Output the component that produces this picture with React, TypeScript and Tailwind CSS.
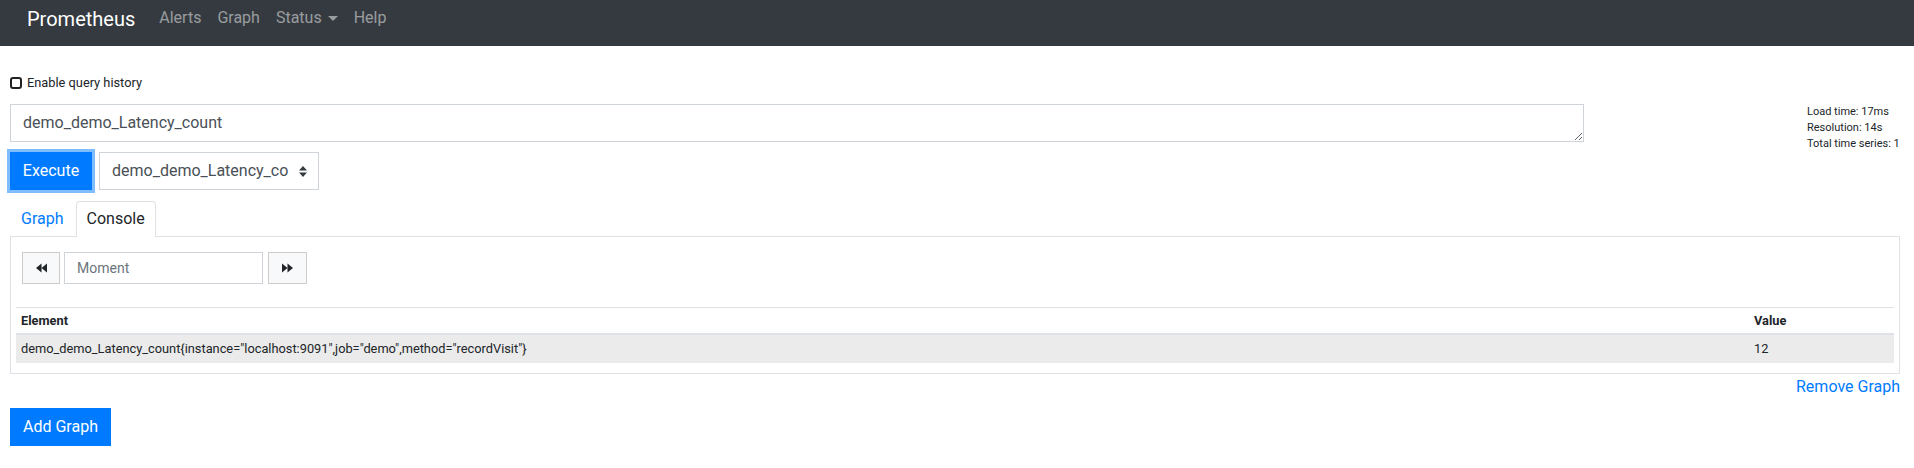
import React from "react";

function Back() {
  return (
    <svg width="11" height="10" viewBox="0 0 11 10">
      <path d="M0 5 L5.5 0.5 L5.5 9.5 Z M5.5 5 L11 0.5 L11 9.5 Z" fill="#212529" />
    </svg>
  );
}

function Fwd() {
  return (
    <svg width="11" height="10" viewBox="0 0 11 10">
      <path d="M11 5 L5.5 0.5 L5.5 9.5 Z M5.5 5 L0 0.5 L0 9.5 Z" fill="#212529" />
    </svg>
  );
}

export default function App() {
  return (
    <div className="font-['Roboto',sans-serif] text-[#212529] bg-white min-h-[468px] w-[1914px]">
      <nav className="h-[46px] bg-[#343a40] flex items-start pl-[27px]">
        <span className="text-[20px] leading-[30px] pt-[4px] text-white">Prometheus</span>
        <div className="flex ml-[16px] pt-[6px] text-[16px] leading-[24px] text-white/50">
          <span className="px-[8px]">Alerts</span>
          <span className="px-[8px]">Graph</span>
          <span className="px-[8px] flex items-center">
            Status
            <span className="ml-[6px] inline-block w-0 h-0 border-l-[5px] border-r-[5px] border-t-[5px] border-l-transparent border-r-transparent border-t-white/50" />
          </span>
          <span className="px-[8px]">Help</span>
        </div>
      </nav>

      <div className="pl-[10px]">
        <div className="mt-[27px] h-[20px] flex items-center">
          <span className="w-[12px] h-[12px] border-2 border-[#222] rounded-[3px]" />
          <span className="ml-[5px] text-[12.8px]">Enable query history</span>
        </div>

        <div className="mt-[11px] flex">
          <div className="w-[1574px]">
            <textarea
              readOnly
              value="demo_demo_Latency_count"
              className="block w-full h-[38px] border border-[#ced4da] px-[12px] py-[6px] text-[16px] leading-[24px] text-[#495057] outline-none"
            />
            <div className="mt-[10px] flex items-center">
              <button className="h-[38px] w-[82px] bg-[#007bff] text-white text-[16px] ring-[3px] ring-[#80bdff]">
                Execute
              </button>
              <div className="ml-[7px] h-[38px] w-[220px] border border-[#ced4da] flex items-center text-[16px] text-[#495057]">
                <span className="ml-[12px] w-[177px] overflow-hidden whitespace-nowrap">demo_demo_Latency_co</span>
                <svg width="8" height="11" viewBox="0 0 8 11" className="ml-[10px]">
                  <path d="M0 4.5 L4 0 L8 4.5 Z" fill="#343a40" />
                  <path d="M0 6.5 L4 11 L8 6.5 Z" fill="#343a40" />
                </svg>
              </div>
            </div>
          </div>
          <div className="ml-[223px] text-[11px] leading-[16px] text-[#212529]">
            <div>Load time: 17ms</div>
            <div>Resolution: 14s</div>
            <div>Total time series: 1</div>
          </div>
        </div>

        <div className="mt-[11px] flex items-end text-[16px] leading-[24px]">
          <span className="ml-[1px] px-[10px] py-[5px] text-[#007bff]">Graph</span>
          <span className="relative z-10 ml-[2px] px-[10px] pt-[5px] pb-[6px] -mb-[1px] bg-white border border-b-0 border-[#dee2e6] rounded-t-[4px]">
            Console
          </span>
        </div>

        <div className="w-[1890px] border border-[#dee2e6]">
          <div className="pt-[15px] pl-[11px] flex h-[47px]">
            <div className="w-[38px] h-[32px] bg-[#f8f9fa] border border-[#ccc] flex items-center justify-center">
              <Back />
            </div>
            <div className="ml-[4px] w-[199px] h-[32px] border border-[#ced4da] flex items-center pl-[12px] text-[14px] text-[#6c757d]">
              Moment
            </div>
            <div className="ml-[5px] w-[39px] h-[32px] bg-[#f8f9fa] border border-[#ccc] flex items-center justify-center">
              <Fwd />
            </div>
          </div>
          <div className="mx-[5px] mt-[23px] mb-[10px] text-[12.8px]">
            <div className="border-t border-[#dee2e6] h-[28px] flex items-center border-b-2 font-bold">
              <span className="pl-[5px] flex-1">Element</span>
              <span className="w-[140px]">Value</span>
            </div>
            <div className="h-[28px] bg-[#ebebeb] flex items-center">
              <span className="pl-[5px] flex-1">
                demo_demo_Latency_count{'{'}instance="localhost:9091",job="demo",method="recordVisit"{'}'}
              </span>
              <span className="w-[140px]">12</span>
            </div>
          </div>
        </div>

        <div className="w-[1890px] flex justify-end mt-[1px] text-[16px] leading-[24px] text-[#007bff]">
          Remove Graph
        </div>

        <button className="mt-[9px] h-[38px] w-[101px] bg-[#007bff] text-white text-[16px]">
          Add Graph
        </button>
      </div>
    </div>
  );
}
